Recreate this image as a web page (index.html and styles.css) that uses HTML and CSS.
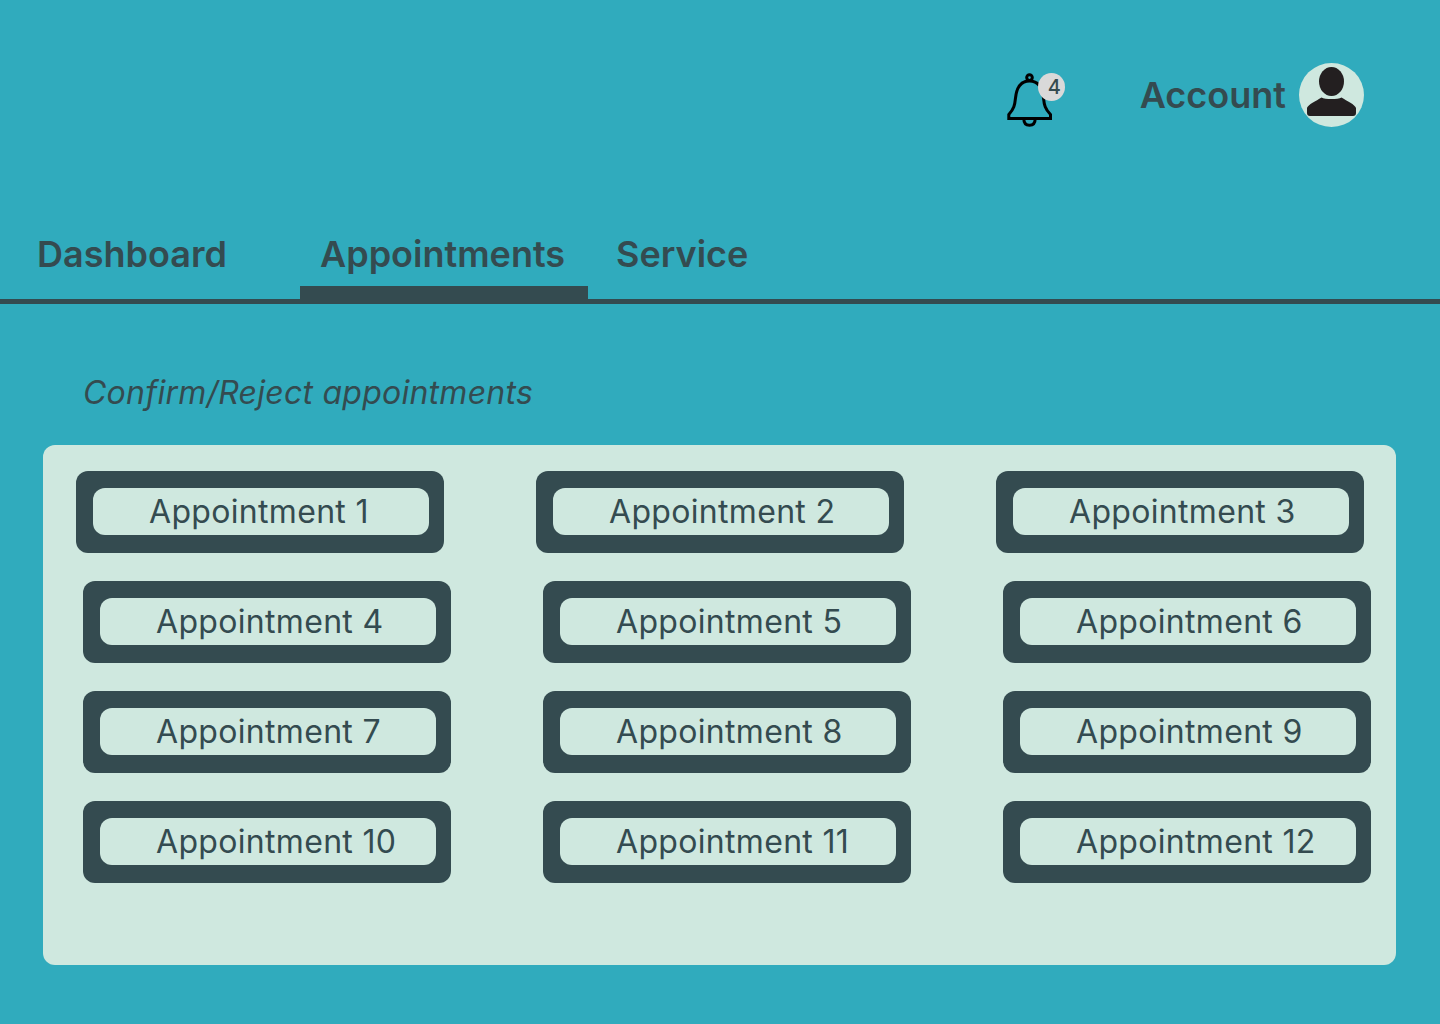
FILE: index.html
```html
<!DOCTYPE html>
<html lang="en">
<head>
<meta charset="utf-8">
<title>Appointments</title>
<link rel="stylesheet" href="styles.css">
</head>
<body>
<header class="topbar">
  <div class="bell">
    <svg class="bell-icon" width="48" height="56" viewBox="0 0 48 56" fill="none" stroke="#000" stroke-width="3">
      <circle cx="23.500" cy="4.600" r="2.800"/>
      <path d="M23.500 8C14 8 10.500 15 9.500 25C8.800 32 8 36 2.800 41.500V45.500H44.500V41.500C39 36 38.200 32 37.500 25C36.500 15 33 8 23.500 8Z"/>
      <path d="M17.800 45.500C17.800 50 20 52.300 23.500 52.300C27 52.300 29.200 50 29.200 45.500"/>
    </svg>
    <span class="badge">4</span>
  </div>
  <span class="account">Account</span>
  <div class="avatar">
    <svg width="65" height="64" viewBox="0 0 65 64">
      <ellipse cx="32.500" cy="18.500" rx="12.500" ry="14.500" fill="#231f20"/>
      <path d="M8 45C9 41.500 17 38 22.500 34.500C26 36.500 39 36.500 42.500 34.500C48 38 56 41.500 57 45V50C57 52 56 53 54 53H11C9 53 8 52 8 50Z" fill="#231f20"/>
    </svg>
  </div>
</header>
<nav class="tabs">
  <a class="tab tab-dashboard">Dashboard</a>
  <a class="tab tab-appointments">Appointments</a>
  <a class="tab tab-service">Service</a>
</nav>
<h1 class="subtitle">Confirm/Reject appointments</h1>
<main class="panel">
  <div class="row row-first">
    <div class="appt"><div class="appt-inner">Appointment 1</div></div>
    <div class="appt"><div class="appt-inner">Appointment 2</div></div>
    <div class="appt"><div class="appt-inner">Appointment 3</div></div>
  </div>
  <div class="row">
    <div class="appt"><div class="appt-inner">Appointment 4</div></div>
    <div class="appt"><div class="appt-inner">Appointment 5</div></div>
    <div class="appt"><div class="appt-inner">Appointment 6</div></div>
  </div>
  <div class="row">
    <div class="appt"><div class="appt-inner">Appointment 7</div></div>
    <div class="appt"><div class="appt-inner">Appointment 8</div></div>
    <div class="appt"><div class="appt-inner">Appointment 9</div></div>
  </div>
  <div class="row">
    <div class="appt"><div class="appt-inner">Appointment 10</div></div>
    <div class="appt"><div class="appt-inner">Appointment 11</div></div>
    <div class="appt"><div class="appt-inner">Appointment 12</div></div>
  </div>
</main>
</body>
</html>
```
FILE: styles.css
```css
* { box-sizing: border-box; }
html, body { margin: 0; padding: 0; }
body {
  width: 1440px;
  height: 1024px;
  overflow: hidden;
  background: #30abbd;
  color: #344b50;
  font-family: Inter, "Liberation Sans", sans-serif;
}
.topbar {
  height: 190px;
  padding: 63px 76px 0 0;
  display: flex;
  align-items: flex-start;
  justify-content: flex-end;
}
.bell {
  position: relative;
  width: 60px;
  height: 56px;
  margin-top: 10px;
  margin-right: 74px;
}
.bell-icon { display: block; }
.badge {
  position: absolute;
  left: 32px;
  top: 0;
  width: 27px;
  height: 28px;
  padding-left: 6px;
  border-radius: 50%;
  background: #d9d9d9;
  font-size: 20px;
  font-weight: 500;
  line-height: 28px;
  text-align: center;
}
.account {
  font-size: 36px;
  font-weight: 600;
  line-height: 64px;
  margin-right: 13px;
}
.avatar {
  width: 65px;
  height: 64px;
  border-radius: 50%;
  background: #cfe8df;
}
.avatar svg { display: block; }
.tabs {
  height: 114px;
  border-bottom: 5px solid #344b50;
  display: flex;
  align-items: flex-start;
}
.tab {
  font-size: 36px;
  font-weight: 600;
  line-height: 44px;
  padding-top: 42px;
}
.tab-dashboard { width: 300px; padding-left: 37px; }
.tab-appointments {
  width: 288px;
  height: 110px;
  padding-left: 20px;
  border-bottom: 14px solid #344b50;
}
.tab-service { padding-left: 28px; }
.subtitle {
  margin: 69px 0 0 83px;
  font-size: 32px;
  font-style: italic;
  font-weight: 400;
  letter-spacing: 0.24px;
  line-height: 39px;
}
.panel {
  width: 1353px;
  height: 520px;
  margin: 33px 0 0 43px;
  padding: 26px 0 0 40px;
  border-radius: 12px;
  background: #cfe8df;
  display: flex;
  flex-direction: column;
  gap: 28px;
}
.row {
  display: flex;
  gap: 92px;
}
.row-first { margin-left: -7px; }
.appt {
  width: 368px;
  height: 82px;
  padding: 17px 15px 18px 17px;
  border-radius: 12px;
  background: #344b50;
}
.appt-inner {
  height: 47px;
  padding-left: 56px;
  border-radius: 12px;
  background: #cfe8df;
  font-size: 32px;
  font-kerning: none;
  letter-spacing: 0.32px;
  line-height: 47px;
  white-space: nowrap;
}
```
